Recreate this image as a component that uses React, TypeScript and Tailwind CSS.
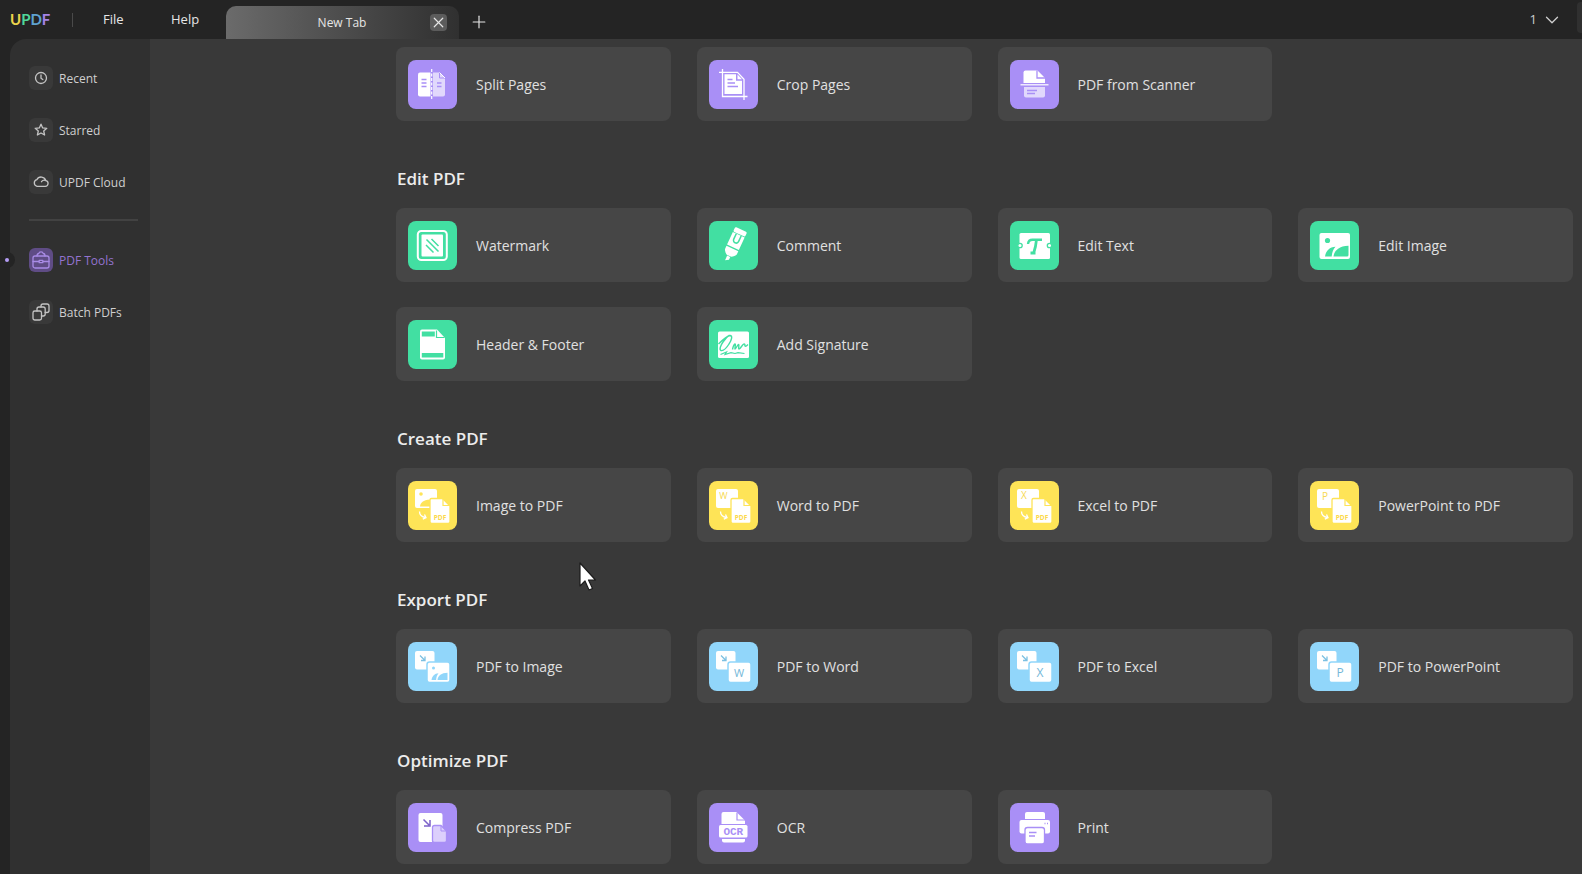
import React from 'react';
import { ChevronDown, Plus, X } from 'lucide-react';

const PURPLE = '#a98ff6';
const GREEN = '#42dfa2';
const YELLOW = '#fee457';
const BLUE = '#91d6fa';

interface Tool {
  label: string;
  color: string;
  art: React.ReactNode;
}

interface Section {
  title?: string;
  tools: Tool[];
}

// Source card + PDF page, used by the "X to PDF" tiles
const ToPdf = ({ children }: { children: React.ReactNode }) => (
  <>
    <rect x="7" y="8" width="22" height="19" rx="2" fill="#fff" />
    {children}
    <path d="M23.500 17.500h11l7.500 7.500v15.500a2 2 0 0 1-2 2H24a2 2 0 0 1-2-2V19a1.500 1.500 0 0 1 1.500-1.500z" fill="#fff" stroke={YELLOW} strokeWidth="1.300" />
    <path d="M35 18v6.500h6.500" fill="none" stroke={YELLOW} strokeWidth="1.200" />
    <text x="32" y="39" textAnchor="middle" fontSize="6.500" fontWeight="700" fill="#fbd94a">PDF</text>
    <path d="M11.500 30.500c0 3.200 1.800 5.200 5.500 6M16.500 33.500l1.500 3.200-3.200 1.500" fill="none" stroke="#fff" strokeWidth="1.300" />
  </>
);

// PDF card + target card, used by the "PDF to X" tiles
const FromPdf = ({ children }: { children: React.ReactNode }) => (
  <>
    <rect x="7" y="9" width="19.500" height="18.500" rx="2" fill="#fff" />
    <path d="M12 13.500l4.500 4.500M17 14.500v4h-4" fill="none" stroke="#7cc0e2" strokeWidth="1.300" />
    <rect x="19" y="20" width="23" height="20.500" rx="2.500" fill="#fff" stroke={BLUE} strokeWidth="1.500" />
    {children}
  </>
);

const Letter = ({ x, y, size, fill, children }: { x: number; y: number; size: number; fill: string; children: string }) => (
  <text x={x} y={y} textAnchor="middle" fontSize={size} fill={fill}>
    {children}
  </text>
);

const SECTIONS: Section[] = [
  {
    tools: [
      {
        label: 'Split Pages',
        color: PURPLE,
        art: (
          <>
            <path d="M12 12.500h10.500v24H12a2 2 0 0 1-2-2v-20a2 2 0 0 1 2-2z" fill="#fff" />
            <path d="M25 12.500H31l6 6v16a2 2 0 0 1-2 2H25z" fill="#fff" fillOpacity=".65" />
            <path d="M31.500 13v5H37" fill="none" stroke={PURPLE} />
            <path d="M31.500 12.500l5.500 5.500" stroke="#fff" />
            <path d="M13.500 19.500h5M13.500 23h5M13.500 26.500h5M29 23h4.500M29 26.500h4.500" stroke={PURPLE} strokeWidth="1.300" />
            <path d="M23.700 9v31" stroke="#fff" strokeWidth="1.200" strokeDasharray="3 1.500" />
          </>
        ),
      },
      {
        label: 'Crop Pages',
        color: PURPLE,
        art: (
          <>
            <path d="M13.500 9v27.500H38.500M10 12.300h18.500l6.500 7V40" fill="none" stroke="#fff" strokeWidth="1.300" />
            <path d="M15.500 14.300h11.500v6.500h6V34H15.500z" fill="#fff" />
            <path d="M28.500 14.500l4.500 4.800h-4.500z" fill="#fff" />
            <path d="M18.500 19.500h5M18.500 23h7.500M18.500 26.500h10.500" stroke={PURPLE} strokeWidth="1.300" />
          </>
        ),
      },
      {
        label: 'PDF from Scanner',
        color: PURPLE,
        art: (
          <>
            <path d="M15.500 10.500h12l7.500 7.500v5H13.500V12.500a2 2 0 0 1 2-2z" fill="#fff" />
            <path d="M27 10.500V18h8" fill="none" stroke={PURPLE} strokeWidth="1.300" />
            <path d="M28.500 12v4.500h4.500z" fill="#fff" />
            <rect x="10.500" y="24" width="28" height="1.500" fill="#fff" fillOpacity=".8" />
            <path d="M14 27h21v8.500a2 2 0 0 1-2 2H16a2 2 0 0 1-2-2z" fill="#fff" fillOpacity=".65" />
            <path d="M17 30.500h10M17 33.500h8" stroke={PURPLE} strokeWidth="1.300" />
          </>
        ),
      },
    ],
  },
  {
    title: 'Edit PDF',
    tools: [
      {
        label: 'Watermark',
        color: GREEN,
        art: (
          <>
            <rect x="9.800" y="10" width="29" height="29" rx="3.500" fill="none" stroke="#fff" strokeWidth="2" />
            <rect x="13.500" y="13.500" width="21.500" height="22" rx="1" fill="#fff" />
            <path d="M18 24l7.500 7.500M18.500 18.500l12 12M23.500 18l7 7" stroke={GREEN} strokeWidth="1.500" />
          </>
        ),
      },
      {
        label: 'Comment',
        color: GREEN,
        art: (
          <g transform="rotate(25 25 24)">
            <rect x="18.500" y="7" width="13" height="5" rx="1.200" fill="#fff" />
            <path d="M18.500 12.800h13v13.700h-13z" fill="#fff" />
            <path d="M22.300 12.800v6a2.700 2.700 0 0 0 5.400 0v-6" fill="none" stroke={GREEN} strokeWidth="1.500" />
            <path d="M18.500 27.800h13v3c0 2-2.500 4.200-4 5h-5c-1.500-.8-4-3-4-5z" fill="#fff" />
            <path d="M23.300 36.500h3.400v3l-3.400 2z" fill="#fff" />
          </g>
        ),
      },
      {
        label: 'Edit Text',
        color: GREEN,
        art: (
          <>
            <rect x="9.500" y="12" width="30.500" height="26" rx="1.500" fill="#fff" />
            <circle cx="10" cy="24.500" r="2.200" fill="#fff" stroke={GREEN} strokeWidth="1.300" />
            <circle cx="39.500" cy="24.500" r="2.200" fill="#fff" stroke={GREEN} strokeWidth="1.300" />
            <path d="M18 23c.3-3 2-4.300 4.500-4.300h9.500" fill="none" stroke={GREEN} strokeWidth="2.400" />
            <path d="M26.500 18.500c-.4 4.500-1.300 9-2.800 13.500M20.500 32h5" fill="none" stroke={GREEN} strokeWidth="2.800" />
          </>
        ),
      },
      {
        label: 'Edit Image',
        color: GREEN,
        art: (
          <>
            <rect x="9.500" y="12" width="30.500" height="26" rx="2" fill="#fff" />
            <circle cx="17.500" cy="19.500" r="2.600" fill={GREEN} />
            <path d="M15 35.500c1-5.500 4.500-9.500 10.500-9.700-2.500 2.700-3.500 6-3.800 9.700z" fill={GREEN} />
            <path d="M23.500 35.500c.8-6.500 6-10.500 15-10.800v9.300a1.500 1.500 0 0 1-1.500 1.500z" fill={GREEN} />
          </>
        ),
      },
      {
        label: 'Header & Footer',
        color: GREEN,
        art: (
          <>
            <path d="M14 9.500h15l8 8.500v19.500a2 2 0 0 1-2 2H14a2 2 0 0 1-2-2v-26a2 2 0 0 1 2-2z" fill="#fff" />
            <path d="M13.800 11.500h13v5h-13zM13.800 33h21.500v4.500H13.800z" fill={GREEN} />
            <path d="M28.500 10.500V17.500h8" fill="none" stroke={GREEN} strokeWidth="1.200" />
          </>
        ),
      },
      {
        label: 'Add Signature',
        color: GREEN,
        art: (
          <>
            <rect x="9" y="11.500" width="31" height="26.500" rx="1.500" fill="#fff" />
            <path
              d="M9.500 24c4-4 8-8 11.500-8.500 3 0 1.500 5-1 8.500-2.500 4-6 7-8 6.500-2-.8-.5-5 2-8.500 2-2.800 4.500-5.500 6.500-7M23.500 29.500c.5-2.500 1.500-5 2.500-5.500 1 0-.5 4.500 0 5 1 0 2.500-4.500 3.500-4.500s-.5 4.500.5 4.500c1.500 0 3.500-5 5-5s.5 1.500 1 2 2-.5 3-1.500"
              fill="none"
              stroke={GREEN}
              strokeWidth="1.400"
            />
            <path d="M11.500 34.500l6-2.500-1.500 2.500 6-1.800 4 .8 3-.8 6.500.8" fill="none" stroke={GREEN} strokeWidth="1.200" />
          </>
        ),
      },
    ],
  },
  {
    title: 'Create PDF',
    tools: [
      {
        label: 'Image to PDF',
        color: YELLOW,
        art: (
          <ToPdf>
            <circle cx="13" cy="13" r="1.800" fill={YELLOW} />
            <path d="M12 25.500c.5-4 3-6.500 10-7v7z" fill={YELLOW} />
          </ToPdf>
        ),
      },
      { label: 'Word to PDF', color: YELLOW, art: <ToPdf><Letter x={14.500} y={17.500} size={9} fill="#f7d94f">W</Letter></ToPdf> },
      { label: 'Excel to PDF', color: YELLOW, art: <ToPdf><Letter x={14} y={18} size={10} fill="#f7d94f">X</Letter></ToPdf> },
      { label: 'PowerPoint to PDF', color: YELLOW, art: <ToPdf><Letter x={15} y={18.500} size={10} fill="#f7d94f">P</Letter></ToPdf> },
    ],
  },
  {
    title: 'Export PDF',
    tools: [
      {
        label: 'PDF to Image',
        color: BLUE,
        art: (
          <FromPdf>
            <circle cx="25.500" cy="26" r="1.500" fill={BLUE} />
            <path d="M23.500 38c.7-4 3-6.500 7-6.700-1.500 2-2.200 4-2.400 6.700zM29.500 38c.5-4.500 4-7 10-7.200V38z" fill={BLUE} />
          </FromPdf>
        ),
      },
      { label: 'PDF to Word', color: BLUE, art: <FromPdf><Letter x={30} y={34.500} size={11} fill="#74b7d8">W</Letter></FromPdf> },
      { label: 'PDF to Excel', color: BLUE, art: <FromPdf><Letter x={30} y={34.500} size={12} fill="#74b7d8">X</Letter></FromPdf> },
      { label: 'PDF to PowerPoint', color: BLUE, art: <FromPdf><Letter x={30} y={34.500} size={12} fill="#74b7d8">P</Letter></FromPdf> },
    ],
  },
  {
    title: 'Optimize PDF',
    tools: [
      {
        label: 'Compress PDF',
        color: PURPLE,
        art: (
          <>
            <rect x="10.500" y="10" width="24" height="29" rx="2" fill="#fff" />
            <path d="M15.500 16.500l5.500 5.500M22 17v6h-6" fill="none" stroke="#7c62c9" strokeWidth="1.500" />
            <path d="M26.500 22.500H33l5.500 5.500v9.500a2 2 0 0 1-2 2h-10a2 2 0 0 1-2-2v-13a2 2 0 0 1 2-2z" fill="#dccffc" stroke={PURPLE} strokeWidth="1.300" />
            <path d="M33 23v5h5" fill="none" stroke={PURPLE} />
          </>
        ),
      },
      {
        label: 'OCR',
        color: PURPLE,
        art: (
          <>
            <path d="M14.500 9h13l8.500 8.500V21H12.500V11a2 2 0 0 1 2-2z" fill="#fff" />
            <path d="M28 9.500V17h8" fill="none" stroke={PURPLE} strokeWidth="1.200" />
            <rect x="10" y="22" width="28.500" height="12.500" rx="1.500" fill="#fff" />
            <text x="24.300" y="32" textAnchor="middle" fontSize="11" fontWeight="700" className="font-['Liberation_Mono',monospace]" fill={PURPLE}>OCR</text>
            <path d="M13 36h23v1.500a2 2 0 0 1-2 2H15a2 2 0 0 1-2-2z" fill="#fff" />
          </>
        ),
      },
      {
        label: 'Print',
        color: PURPLE,
        art: (
          <>
            <path d="M17 9h16a2 2 0 0 1 2 2v5H15v-5a2 2 0 0 1 2-2z" fill="#fff" />
            <rect x="9.500" y="17" width="30.500" height="13.500" rx="2" fill="#fff" />
            <rect x="15" y="24.500" width="19.500" height="16.500" rx="2.500" fill="#fff" stroke={PURPLE} strokeWidth="1.300" />
            <path d="M34.500 20.500h1M37 20.500h1M19 29.500h7.500M19 33h6" stroke={PURPLE} strokeWidth="1.300" />
          </>
        ),
      },
    ],
  },
];

const ToolCard = ({ tool }: { tool: Tool }) => (
  <button type="button" className="flex h-[74px] items-center gap-[19px] rounded-lg bg-[#464646] pl-3 text-left text-sm text-[#e0e0e0]">
    <svg viewBox="0 0 49 49" className="size-[49px] shrink-0" aria-hidden="true">
      <rect width="49" height="49" rx="8" fill={tool.color} />
      {tool.art}
    </svg>
    <span className="pt-0.5">{tool.label}</span>
  </button>
);

interface NavProps {
  label: string;
  active?: boolean;
  children: React.ReactNode;
}

const NavItem = ({ label, active, children }: NavProps) => (
  <a
    href="#"
    className={`relative flex h-6 items-center gap-1.5 text-xs ${active ? 'text-[#9373cf]' : 'text-[#cfcfcf]'}`}
  >
    {active && (
      <span className="absolute -left-[30px] flex size-4 items-center justify-center rounded-full bg-[#242424]">
        <span className="size-1 rounded-full bg-[#b49cf5]" />
      </span>
    )}
    <span className={`flex size-6 shrink-0 items-center justify-center rounded-md ${active ? 'bg-[#5f4c85] text-[#a98be6]' : 'bg-[#393939] text-[#c4c4c4]'}`}>
      <svg viewBox="0 0 18 18" className="size-[18px]" fill="none" stroke="currentColor" strokeWidth="1.300" strokeLinejoin="round" strokeLinecap="round">
        {children}
      </svg>
    </span>
    <span className="pt-px whitespace-nowrap">{label}</span>
  </a>
);

const Header = () => (
  <header className="flex h-[39px] items-center bg-[#242424] text-[#e6e6e6]">
    <div className="flex w-[62px] pb-0.5 pl-[10px] font-['Lato',sans-serif] text-[15px] leading-4 font-bold">
      <span className="text-[#ecd34c]">U</span>
      <span className="text-[#4fd69a]">P</span>
      <span className="text-[#5fa3d0]">D</span>
      <span className="text-[#a583e6]">F</span>
    </div>
    <div className="ml-[10px] h-[14px] w-px bg-[#4a4a4a]" />
    <nav className="flex w-[153px] pl-[30px] text-[13px]">
      <button type="button" className="w-[68px] text-left">File</button>
      <button type="button">Help</button>
    </nav>
    <div className="flex h-[33px] w-[233px] items-center self-end rounded-t-[10px] bg-linear-to-r from-[#6b6b6b] to-[#303030] pr-3 text-xs">
      <span className="flex-1 pl-7 text-center">New Tab</span>
      <button type="button" aria-label="Close tab" className="flex size-[17px] items-center justify-center rounded bg-[#5c5c5c]">
        <X size={17} strokeWidth={1.700} />
      </button>
    </div>
    <button type="button" aria-label="Add tab" className="mt-1 ml-[10px]">
      <Plus size={20} strokeWidth={1.400} />
    </button>
    <button type="button" className="ml-auto flex items-center gap-1 text-[13px] text-[#cfcfcf]">
      1
      <ChevronDown size={22} strokeWidth={1.400} />
    </button>
    <div className="mb-1 ml-[14px] h-[31px] w-[5px] rounded-l bg-[#303030]" />
  </header>
);

const Sidebar = () => (
  <aside className="flex w-[140px] shrink-0 flex-col gap-7 rounded-tl-2xl bg-[#303030] pt-[27px] pr-3 pl-[19px]">
    <NavItem label="Recent">
      <circle cx="9" cy="9" r="5.500" />
      <path d="M9 6v3.200l1.800 1.300" />
    </NavItem>
    <NavItem label="Starred">
      <path d="M9 3.200l1.700 3.700 4.100.4-3.100 2.700.9 4L9 12l-3.600 2 .9-4-3.100-2.700 4.100-.4z" />
    </NavItem>
    <NavItem label="UPDF Cloud">
      <path d="M5 13.300h8.300a2.900 2.900 0 0 0 .6-5.700A4.900 4.900 0 0 0 4.800 6.700a3.400 3.400 0 0 0 .2 6.600zM9.500 8.700a3.500 3.500 0 0 1 4.300-1.100" />
    </NavItem>
    <div className="mt-[-3px] mb-[-1px] h-[2px] bg-[#424242]" />
    <NavItem label="PDF Tools" active>
      <rect x="1" y="5" width="16" height="12" rx="2" />
      <path d="M5 5c0-2 1-2.500 1.800-2.500C7 1 8 .8 9 .8s2 .2 2.200 1.700C12 2.500 13 3 13 5M1 10.500h6M11 10.500h6M7.200 9.300h3.600v2.400H7.200z" />
    </NavItem>
    <NavItem label="Batch PDFs">
      <rect x="1" y="8" width="8.500" height="9" rx="1.800" />
      <path d="M5 8V6a2 2 0 0 1 2-2h4.200a2 2 0 0 1 2 2v5a2 2 0 0 1-2 2H9.500" />
      <path d="M9 4V3a2 2 0 0 1 2-2h4a2 2 0 0 1 2 2v4.500a2 2 0 0 1-2 2h-1.800" />
    </NavItem>
  </aside>
);

export default function App() {
  return (
    <div className="flex min-h-screen flex-col bg-[#242424] font-['Open_Sans','Noto_Sans',sans-serif]">
      <Header />
      <div className="flex flex-1 pl-[10px]">
        <Sidebar />
        <main className="flex-1 bg-[#393939] pt-2 pr-[9px] pb-2 pl-[246px]">
          {SECTIONS.map((section, i) => (
            <section key={i}>
              {section.title && (
                <h2 className="px-px pt-[46px] pb-[17px] text-[17px] leading-6 font-semibold text-[#ececec]">{section.title}</h2>
              )}
              <div className="grid grid-cols-4 gap-x-[26px] gap-y-[25px]">
                {section.tools.map((tool) => (
                  <ToolCard key={tool.label} tool={tool} />
                ))}
              </div>
            </section>
          ))}
        </main>
      </div>
      {/* Mouse pointer */}
      <svg viewBox="0 0 18 30" className="pointer-events-none absolute top-[562px] left-[579px] h-[30px] w-[18px]" aria-hidden="true">
        <path d="M1 1v23l5-5 4 9 3.500-1.500-4-8.500h7z" fill="#fff" stroke="#1c1c1c" strokeWidth="1.200" strokeLinejoin="round" />
      </svg>
    </div>
  );
}
